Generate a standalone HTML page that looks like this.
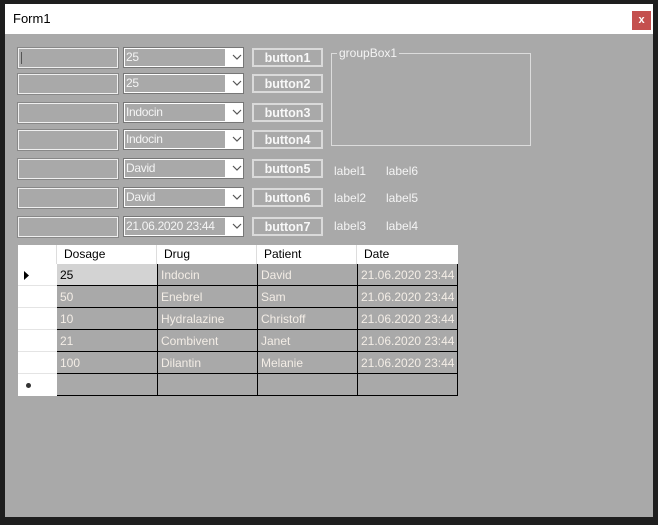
<!DOCTYPE html>
<html><head><meta charset="utf-8"><style>
*{margin:0;padding:0;box-sizing:border-box}
body{width:658px;height:525px;background:#1e1e1e;position:relative;overflow:hidden;font-family:"Liberation Sans",sans-serif;font-size:12px}
.a{position:absolute}
.win{left:5px;top:4px;width:648px;height:513px;background:#a9a9a9}
.title{left:5px;top:4px;width:648px;height:30px;background:#fff}
.tb{width:100px;height:20px;border:1px solid #f0f0f0;outline:1px solid #888;background:#a9a9a9}
.cb{width:121px;height:21px;border:1px solid #777;background:#fff}
.cb .in{position:absolute;left:1px;top:1px;width:100px;height:17px;background:#a9a9a9;color:#f4f4f4;font-size:12px;line-height:17px;padding-left:1px;letter-spacing:-0.3px}
.cb .ar{position:absolute;left:106px;top:2px;width:14px;height:14px}
.btn{width:71px;height:19px;border:2px solid #dadada;color:#f8f8f8;font-weight:bold;font-size:12.5px;text-align:center;line-height:16px}
.lb{color:#f4f4f4;font-size:12px}
.c{position:absolute;height:22px;border-right:1px solid #000;border-bottom:1px solid #000;background:#a9a9a9;color:#f3ede6;font-size:12px;line-height:22px;padding-left:3px}
.h{position:absolute;top:245px;height:19px;background:#fff;color:#000;font-size:12px;line-height:19px;padding-left:7px;border-right:1px solid #ddd}
.rh{position:absolute;left:18px;width:39px;height:22px;background:#fff;border-bottom:1px solid #e4e4e4}
</style></head><body>
<div class="a win"></div>
<div class="a title"></div>
<div class="a" style="left:13px;top:11px;font-size:13px;color:#000">Form1</div>
<div class="a" style="left:632px;top:11px;width:19px;height:19px;background:#c4504e;color:#fff;font-size:11px;font-weight:bold;text-align:center;line-height:18px">x</div>

<div class="a tb" style="left:18px;top:48px"><div style="position:absolute;left:2px;top:3px;width:1px;height:12px;background:#555"></div></div>
<div class="a tb" style="left:18px;top:74px"></div>
<div class="a tb" style="left:18px;top:103px"></div>
<div class="a tb" style="left:18px;top:130px"></div>
<div class="a tb" style="left:18px;top:159px"></div>
<div class="a tb" style="left:18px;top:188px"></div>
<div class="a tb" style="left:18px;top:217px"></div>

<div class="a cb" style="left:123px;top:47px"><div class="in">25</div><svg class="ar" viewBox="0 0 14 14"><path d="M3 5l4 4 4-4" fill="none" stroke="#555" stroke-width="1.2"/></svg></div>
<div class="a cb" style="left:123px;top:73px"><div class="in">25</div><svg class="ar" viewBox="0 0 14 14"><path d="M3 5l4 4 4-4" fill="none" stroke="#555" stroke-width="1.2"/></svg></div>
<div class="a cb" style="left:123px;top:102px"><div class="in">Indocin</div><svg class="ar" viewBox="0 0 14 14"><path d="M3 5l4 4 4-4" fill="none" stroke="#555" stroke-width="1.2"/></svg></div>
<div class="a cb" style="left:123px;top:129px"><div class="in">Indocin</div><svg class="ar" viewBox="0 0 14 14"><path d="M3 5l4 4 4-4" fill="none" stroke="#555" stroke-width="1.2"/></svg></div>
<div class="a cb" style="left:123px;top:158px"><div class="in">David</div><svg class="ar" viewBox="0 0 14 14"><path d="M3 5l4 4 4-4" fill="none" stroke="#555" stroke-width="1.2"/></svg></div>
<div class="a cb" style="left:123px;top:187px"><div class="in">David</div><svg class="ar" viewBox="0 0 14 14"><path d="M3 5l4 4 4-4" fill="none" stroke="#555" stroke-width="1.2"/></svg></div>
<div class="a cb" style="left:123px;top:216px"><div class="in">21.06.2020 23:44</div><svg class="ar" viewBox="0 0 14 14"><path d="M3 5l4 4 4-4" fill="none" stroke="#555" stroke-width="1.2"/></svg></div>

<div class="a btn" style="left:252px;top:48px">button1</div>
<div class="a btn" style="left:252px;top:74px">button2</div>
<div class="a btn" style="left:252px;top:103px">button3</div>
<div class="a btn" style="left:252px;top:130px">button4</div>
<div class="a btn" style="left:252px;top:159px">button5</div>
<div class="a btn" style="left:252px;top:188px">button6</div>
<div class="a btn" style="left:252px;top:217px">button7</div>

<div class="a" style="left:331px;top:53px;width:200px;height:93px;border:1px solid #dcdcdc"></div>
<div class="a lb" style="left:337px;top:46px;background:#a9a9a9;padding:0 2px;font-size:12px">groupBox1</div>

<div class="a lb" style="left:334px;top:164px">label1</div>
<div class="a lb" style="left:386px;top:164px">label6</div>
<div class="a lb" style="left:334px;top:191px">label2</div>
<div class="a lb" style="left:386px;top:191px">label5</div>
<div class="a lb" style="left:334px;top:219px">label3</div>
<div class="a lb" style="left:386px;top:219px">label4</div>

<!-- grid -->
<div class="a" style="left:18px;top:245px;width:39px;height:19px;background:#fff;border-right:1px solid #ddd"></div>
<div class="h" style="left:57px;width:100px">Dosage</div>
<div class="h" style="left:157px;width:100px">Drug</div>
<div class="h" style="left:257px;width:100px">Patient</div>
<div class="h" style="left:357px;width:101px;border-right:none">Date</div>

<div class="rh" style="top:264px"><svg style="position:absolute;left:6px;top:7px" width="6" height="9"><path d="M0 0L5 4.5 0 9z" fill="#000"/></svg></div>
<div class="rh" style="top:286px"></div>
<div class="rh" style="top:308px"></div>
<div class="rh" style="top:330px"></div>
<div class="rh" style="top:352px"></div>
<div class="rh" style="top:374px;border-bottom:none"><div style="position:absolute;left:8px;top:9px;width:5px;height:5px;border-radius:50%;background:#333"></div></div>

<div class="c" style="left:57px;top:264px;width:101px;background:#d3d3d3;color:#000">25</div>
<div class="c" style="left:158px;top:264px;width:100px">Indocin</div>
<div class="c" style="left:258px;top:264px;width:100px">David</div>
<div class="c" style="left:358px;top:264px;width:100px">21.06.2020 23:44</div>

<div class="c" style="left:57px;top:286px;width:101px">50</div>
<div class="c" style="left:158px;top:286px;width:100px">Enebrel</div>
<div class="c" style="left:258px;top:286px;width:100px">Sam</div>
<div class="c" style="left:358px;top:286px;width:100px">21.06.2020 23:44</div>

<div class="c" style="left:57px;top:308px;width:101px">10</div>
<div class="c" style="left:158px;top:308px;width:100px">Hydralazine</div>
<div class="c" style="left:258px;top:308px;width:100px">Christoff</div>
<div class="c" style="left:358px;top:308px;width:100px">21.06.2020 23:44</div>

<div class="c" style="left:57px;top:330px;width:101px">21</div>
<div class="c" style="left:158px;top:330px;width:100px">Combivent</div>
<div class="c" style="left:258px;top:330px;width:100px">Janet</div>
<div class="c" style="left:358px;top:330px;width:100px">21.06.2020 23:44</div>

<div class="c" style="left:57px;top:352px;width:101px">100</div>
<div class="c" style="left:158px;top:352px;width:100px">Dilantin</div>
<div class="c" style="left:258px;top:352px;width:100px">Melanie</div>
<div class="c" style="left:358px;top:352px;width:100px">21.06.2020 23:44</div>

<div class="c" style="left:57px;top:374px;width:101px"></div>
<div class="c" style="left:158px;top:374px;width:100px"></div>
<div class="c" style="left:258px;top:374px;width:100px"></div>
<div class="c" style="left:358px;top:374px;width:100px"></div>
</body></html>
